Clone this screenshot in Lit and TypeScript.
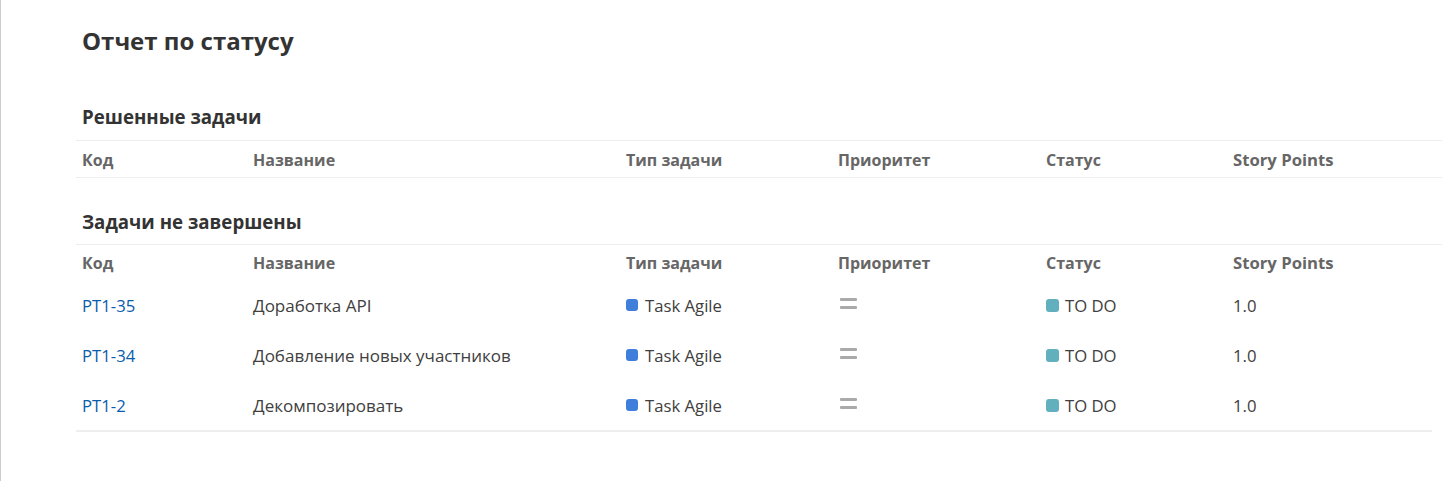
import { LitElement, html, css } from "lit";
import { customElement } from "lit/decorators.js";

const HEADERS = ["Код", "Название", "Тип задачи", "Приоритет", "Статус"];
const ROWS = [
  ["PT1-35", "Доработка API"],
  ["PT1-34", "Добавление новых участников"],
  ["PT1-2", "Декомпозировать"],
];

@customElement("app-root")
export class AppRoot extends LitElement {
  static styles = css`
    :host {
      display: block;
      height: 481px;
      box-sizing: border-box;
      overflow: hidden;
      background: #fff;
      border-left: 1px solid #ccc;
      font-family: "Open Sans", "Noto Sans", sans-serif;
      color: #404040;
      font-size: 16.7px;
    }
    .page { padding: 0 0 0 75px; }
    h1 {
      margin: 0;
      padding: 24px 0 0 6px;
      font-size: 24px;
      line-height: 34px;
      height: 92px;
      box-sizing: border-box;
      font-weight: 700;
      color: #333;
    }
    h2 {
      margin: 0;
      padding-left: 6px;
      font-size: 18.7px;
      line-height: 24px;
      font-weight: 700;
      color: #333;
    }
    .s1 { height: 48px; padding-top: 13px; box-sizing: border-box; }
    .s2 { height: 66px; padding-top: 32px; box-sizing: border-box; }
    .grid {
      display: grid;
      grid-template-columns: 171px 373px 212px 208px 187px 209px;
      padding-left: 6px;
      align-items: center;
    }
    .head {
      font-weight: 700;
      font-size: 16px;
      color: #666;
      border-top: 1px solid #eee;
      height: 36px;
      box-sizing: border-box;
      width: 1366px;
    }
    .head.closed { height: 38px; padding-top: 1px; border-bottom: 1px solid #eee; }
    .latin { font-size: 16.7px; }
    .row { height: 50px; width: 1350px; }
    .body { width: 1356px; border-bottom: 2px solid #eee; }
    .name { font-size: 17px; }
    a { color: #0b5cad; text-decoration: none; }
    .tag { display: flex; align-items: center; gap: 7px; }
    .tag.status { gap: 6px; }
    .sq { width: 12px; height: 12px; border-radius: 3px; background: #3f7fdb; flex: none; }
    .sq.todo { width: 13px; height: 13px; background: #62b0bd; }
    .prio { display: block; margin-top: -4px; }
  `;

  private head(closed: boolean) {
    return html`<div class="grid head ${closed ? "closed" : ""}">
      ${HEADERS.map((h) => html`<div>${h}</div>`)}
      <div class="latin">Story Points</div>
    </div>`;
  }

  render() {
    return html`<div class="page">
      <h1>Отчет по статусу</h1>
      <h2 class="s1">Решенные задачи</h2>
      ${this.head(true)}
      <h2 class="s2">Задачи не завершены</h2>
      ${this.head(false)}
      <div class="body">
        ${ROWS.map(
          ([k, n]) => html`<div class="grid row">
            <div><a href="#">${k}</a></div>
            <div class="name">${n}</div>
            <div class="tag"><span class="sq"></span>Task Agile</div>
            <div>
              <svg class="prio" width="20" height="14" viewBox="0 0 20 14">
                <rect x="2" y="2" width="17" height="3" rx="1" fill="#aaa"></rect>
                <rect x="2" y="10" width="17" height="3" rx="1" fill="#aaa"></rect>
              </svg>
            </div>
            <div class="tag status"><span class="sq todo"></span>TO DO</div>
            <div>1.0</div>
          </div>`
        )}
      </div>
    </div>`;
  }
}
